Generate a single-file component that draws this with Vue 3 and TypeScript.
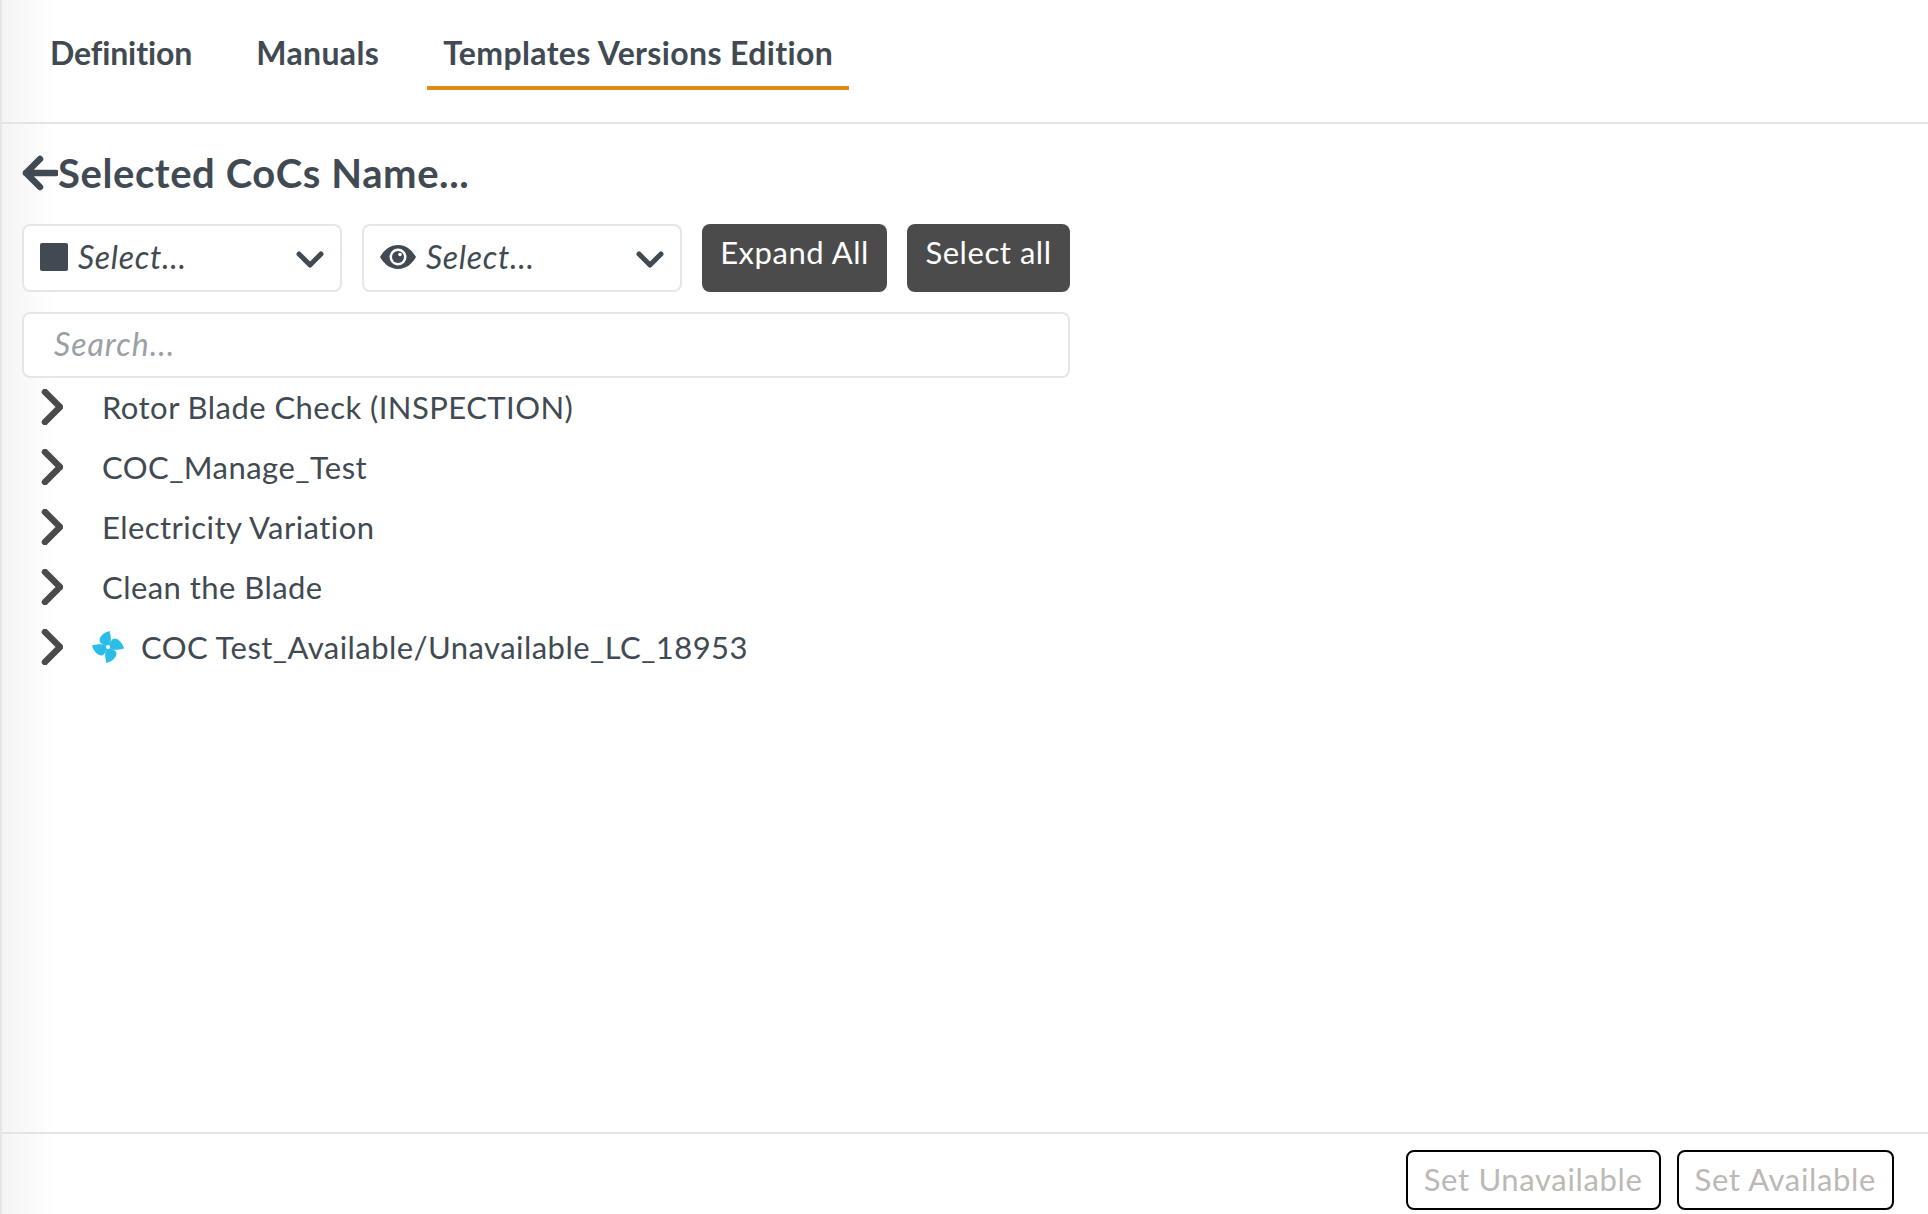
<script setup lang="ts">
const tabs = [
  { label: 'Definition', active: false },
  { label: 'Manuals', active: false },
  { label: 'Templates Versions Edition', active: true },
]
const rows = [
  { label: 'Rotor Blade Check (INSPECTION)', fan: false },
  { label: 'COC_Manage_Test', fan: false },
  { label: 'Electricity Variation', fan: false },
  { label: 'Clean the Blade', fan: false },
  { label: 'COC Test_Available/Unavailable_LC_18953', fan: true },
]
const blades = [0, 90, 180, 270]
</script>

<template>
  <div class="page">
    <nav class="tabs">
      <div v-for="t in tabs" :key="t.label" class="tab" :class="{ active: t.active }">{{ t.label }}</div>
    </nav>
    <main class="content">
      <h1 class="title">
        <svg class="back" width="36" height="36" viewBox="0 0 36 36" fill="none" stroke="#414a52" stroke-width="6.500" stroke-linecap="round" stroke-linejoin="round">
          <path d="M34 18H4M18 4 4 18 18 32" />
        </svg>
        <span>Selected CoCs Name...</span>
      </h1>
      <div class="controls">
        <div class="select">
          <span class="square"></span>
          <span class="select-text">Select...</span>
          <svg class="caret" width="28" height="18" viewBox="0 0 28 18" fill="none" stroke="#414a52" stroke-width="5" stroke-linecap="round" stroke-linejoin="round"><path d="M3 4l11 11L25 4" /></svg>
        </div>
        <div class="select">
          <svg class="eye" width="36" height="24" viewBox="0 0 36 24">
            <path fill="#414a52" fill-rule="evenodd" d="M18 0C10 0 4 5 0 12c4 7 10 12 18 12s14-5 18-12C32 5 26 0 18 0Zm0 3.500a8.500 8.500 0 1 1 0 17 8.500 8.500 0 0 1 0-17Z" />
            <circle cx="18" cy="12" r="6" fill="#414a52" />
            <circle cx="20" cy="9.500" r="1.800" fill="#fff" />
          </svg>
          <span class="select-text">Select...</span>
          <svg class="caret" width="28" height="18" viewBox="0 0 28 18" fill="none" stroke="#414a52" stroke-width="5" stroke-linecap="round" stroke-linejoin="round"><path d="M3 4l11 11L25 4" /></svg>
        </div>
        <button class="dark expand">Expand All</button>
        <button class="dark selectall">Select all</button>
      </div>
      <div class="search">Search...</div>
      <ul class="tree">
        <li v-for="r in rows" :key="r.label" class="row">
          <svg class="chev" width="22" height="36" viewBox="0 0 22 36" fill="none" stroke="#4b4b4b" stroke-width="6.500" stroke-linecap="round" stroke-linejoin="round"><path d="M4 3l15 15L4 33" /></svg>
          <svg v-if="r.fan" class="fan" width="34" height="34" viewBox="0 0 34 34">
            <g fill="#29bde8">
              <path v-for="a in blades" :key="a" :transform="`rotate(${a} 17 17)`" d="M18.500 1C13 2.500 8.500 6.500 8.500 10.500c0 1.500 1.500 3 3 3.700L17 17l2.800-5.500C20 8 19.500 4 18.500 1Z" />
            </g>
            <circle cx="17" cy="17" r="2" fill="#fff" />
          </svg>
          <span class="label" :class="{ 'with-fan': r.fan }">{{ r.label }}</span>
        </li>
      </ul>
    </main>
    <footer class="footer">
      <button class="ghost">Set Unavailable</button>
      <button class="ghost">Set Available</button>
    </footer>
  </div>
</template>

<style>
html, body { margin: 0; background: #fff; }
</style>

<style scoped>
.page {
  box-sizing: border-box;
  height: 1214px;
  display: flex;
  flex-direction: column;
  border-left: 2px solid #e6e6e6;
  background: linear-gradient(90deg, #f4f4f4 0, #ffffff 54px);
  font-family: Lato, "Open Sans", sans-serif;
  color: #414a52;
  overflow: hidden;
}
.tabs {
  box-sizing: border-box;
  height: 124px;
  display: flex;
  gap: 32px;
  padding: 0 0 0 32px;
  border-bottom: 2px solid #e4e4e4;
}
.tab {
  box-sizing: border-box;
  height: 90px;
  padding: 33px 16px 0;
  font-size: 32px;
  line-height: 40px;
  font-weight: 700;
  letter-spacing: 0.36px;
  white-space: nowrap;
}
.tab:first-child { letter-spacing: -0.1px; }
.tab.active { border-bottom: 4px solid #df8a12; }
.content {
  flex: 1;
  padding: 0 0 0 20px;
  min-height: 0;
}
.title {
  margin: 0;
  height: 98px;
  padding-bottom: 2px;
  box-sizing: content-box;
  display: flex;
  align-items: center;
  font-size: 40px;
  font-weight: 700;
  line-height: 46px;
  letter-spacing: 0.6px;
}
.back { flex: none; }
.controls {
  display: flex;
  gap: 20px;
  height: 68px;
  width: 1048px;
}
.select {
  box-sizing: border-box;
  width: 320px;
  height: 68px;
  border: 2px solid #e6e6e6;
  border-radius: 8px;
  background: #fff;
  display: flex;
  align-items: center;
  padding: 0 16px;
  gap: 10px;
}
.square {
  width: 28px;
  height: 28px;
  border-radius: 2px;
  background: #414a52;
  flex: none;
  margin-bottom: 2px;
}
.eye { flex: none; margin-bottom: 2px; }
.select-text {
  flex: 1;
  font-style: italic;
  font-size: 32px;
  letter-spacing: 0.7px;
  padding-bottom: 3px;
}
.caret { flex: none; margin-top: 2px; }
.dark {
  height: 68px;
  border: 0;
  border-radius: 8px;
  background: #4b4b4b;
  color: #fff;
  font: 400 31px Lato, "Open Sans", sans-serif;
  letter-spacing: 0.55px;
  padding: 0 0 12px;
}
.expand { width: 185px; }
.selectall { width: 163px; }
.search {
  box-sizing: border-box;
  width: 1048px;
  height: 66px;
  margin-top: 20px;
  border: 2px solid #e6e6e6;
  border-radius: 8px;
  background: #fff;
  padding: 0 30px 3px;
  display: flex;
  align-items: center;
  font-style: italic;
  font-size: 32px;
  letter-spacing: 1px;
  color: #9aa0a6;
}
.tree {
  list-style: none;
  margin: -1px 0 0;
  padding: 0 0 0 19px;
}
.row {
  height: 60px;
  display: flex;
  align-items: center;
}
.chev { flex: none; }
.fan { flex: none; margin-left: 28px; }
.label {
  font-size: 31px;
  letter-spacing: 0.45px;
  margin-left: 39px;
  white-space: nowrap;
}
.label.with-fan { margin-left: 16px; }
.footer {
  box-sizing: border-box;
  height: 82px;
  border-top: 2px solid #e4e4e4;
  display: flex;
  justify-content: flex-end;
  align-items: flex-start;
  gap: 16px;
  padding: 16px 34px 0 0;
}
.ghost {
  box-sizing: border-box;
  height: 60px;
  border: 2px solid #000;
  border-radius: 8px;
  background: #fff;
  color: #bcb9b5;
  font: 400 31px Lato, "Open Sans", sans-serif;
  letter-spacing: 0.65px;
  padding: 0 16px 2px;
}
</style>
